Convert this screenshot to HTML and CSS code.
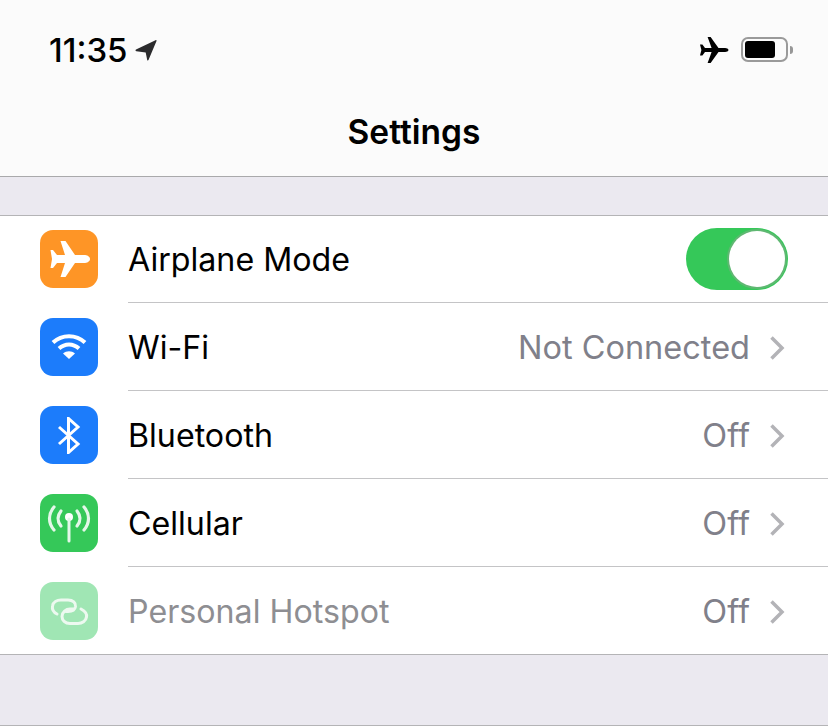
FILE: index.html
```html
<!DOCTYPE html>
<html>
<head>
  <meta charset="utf-8">
  <title>Settings</title>
  <link rel="stylesheet" href="styles.css">
</head>
<body>
  <header class="nav">
    <div class="status-bar">
      <div class="status-left">
        <span class="time">11:35</span>
        <svg class="location" width="24" height="24" viewBox="0 0 24 24"><path d="M2 11.500 21.500 2.200c.7-.3 1.200.2 1 .9L14.500 22c-.3.700-1.200.6-1.300-.1l-1.500-7.400-9.300-1.300c-1-.2-1.200-1.200-.4-1.700z" fill="#2b2b2d"/></svg>
      </div>
      <div class="status-right">
        <svg class="plane-small" width="30" height="28" viewBox="0 0 30 28"><path d="M29.500 14c0-1.300-1.800-2-3.400-2h-6.600L11.600 1h-3l4 11H6L3.400 8.500H1L2.400 14 1 19.500h2.400L6 16h6.600l-4 11h3l7.900-11h6.600c1.600 0 3.400-.7 3.400-2z" fill="#000"/></svg>
        <div class="battery">
          <div class="battery-level"></div>
        </div>
        <div class="battery-tip"></div>
      </div>
    </div>
    <h1 class="nav-title">Settings</h1>
  </header>

  <div class="gap-top"></div>

  <ul class="settings-list">
    <li class="row">
      <div class="icon icon-orange">
        <svg width="58" height="58" viewBox="0 0 58 58"><path d="M50 29c0-2.500-3-4-6-4h-9L25.500 11H20.500L25 25h-8l-4-5H10.500L12 29l-1.500 9H13l4-5h8l-4.500 14h5L35 33h9c3 0 6-1.500 6-4z" fill="#fff"/></svg>
      </div>
      <div class="row-body">
        <span class="row-label">Airplane Mode</span>
        <div class="toggle"><div class="knob"></div></div>
      </div>
    </li>
    <li class="row">
      <div class="icon icon-blue">
        <svg width="36" height="28" viewBox="0 0 36 28" fill="none" stroke="#fff" stroke-width="4"><path d="M2 9.500C11 1 25 1 34 9.500"/><path d="M8 15.500c6-5.500 14-5.500 20 0"/><path d="M18 26l-6-5.500c3.500-3 8.500-3 12 0z" fill="#fff" stroke="none"/></svg>
      </div>
      <div class="row-body">
        <span class="row-label">Wi-Fi</span>
        <span class="row-value">Not Connected</span>
        <svg class="chevron" width="16" height="26" viewBox="0 0 16 26"><path d="M2.500 2.500 13 13 2.500 23.500" fill="none" stroke="#b3b3b7" stroke-width="3.500"/></svg>
      </div>
    </li>
    <li class="row">
      <div class="icon icon-blue">
        <svg width="24" height="37" viewBox="0 0 24 37" fill="none" stroke="#fff" stroke-width="3"><path d="M2 10 21 27 11.500 35.500V1.500L21 10 2 27"/></svg>
      </div>
      <div class="row-body">
        <span class="row-label">Bluetooth</span>
        <span class="row-value">Off</span>
        <svg class="chevron" width="16" height="26" viewBox="0 0 16 26"><path d="M2.500 2.500 13 13 2.500 23.500" fill="none" stroke="#b3b3b7" stroke-width="3.500"/></svg>
      </div>
    </li>
    <li class="row">
      <div class="icon icon-green">
        <svg width="58" height="58" viewBox="0 0 58 58" fill="none" stroke="#e4f7e9" stroke-width="3.200" stroke-linecap="round"><path d="M14 13C8 20 8 29 14 36"/><path d="M21 17c-4 5-4 10 0 15"/><path d="M44 13c6 7 6 16 0 23"/><path d="M37 17c4 5 4 10 0 15"/><circle cx="29" cy="23" r="4" fill="#fff" stroke="none"/><path d="M29 25v22" stroke-width="3"/></svg>
      </div>
      <div class="row-body">
        <span class="row-label">Cellular</span>
        <span class="row-value">Off</span>
        <svg class="chevron" width="16" height="26" viewBox="0 0 16 26"><path d="M2.500 2.500 13 13 2.500 23.500" fill="none" stroke="#b3b3b7" stroke-width="3.500"/></svg>
      </div>
    </li>
    <li class="row row-disabled">
      <div class="icon icon-mint">
        <svg width="58" height="58" viewBox="0 0 58 58" fill="none" stroke="#edf9f0" stroke-width="3" stroke-linecap="round"><path d="M17 32c-4-2-5-5-4.500-8C13 20 17 18 21 18h7c5 0 8 3 7.500 6.500C35 27.500 32 29.500 28 29.500h-2"/><path d="M41 27c4 2 6 5 5.500 8C46 39 42 41.500 38 41.500h-8c-5 0-8-3.500-8-7C22 30 26 27 30 27h3"/></svg>
      </div>
      <div class="row-body">
        <span class="row-label">Personal Hotspot</span>
        <span class="row-value">Off</span>
        <svg class="chevron" width="16" height="26" viewBox="0 0 16 26"><path d="M2.500 2.500 13 13 2.500 23.500" fill="none" stroke="#b3b3b7" stroke-width="3.500"/></svg>
      </div>
    </li>
  </ul>

  <div class="gap-bottom"></div>
</body>
</html>
```

FILE: styles.css
```css
body {
  margin: 0;
  height: 727px;
  overflow: hidden;
  background-color: #fff;
  font-family: Inter, "Liberation Sans", sans-serif;
  color: #000;
}

.nav {
  height: 176px;
  background-color: #fbfbfb;
  border-bottom: 1px solid #a9a9ab;
}

.status-bar {
  height: 96px;
  box-sizing: border-box;
  padding: 3px 35px 0 49px;
  display: flex;
  justify-content: space-between;
  align-items: center;
}

.status-left {
  display: flex;
  align-items: center;
  gap: 6px;
}

.time {
  font-size: 33px;
  font-weight: 500;
}

.status-right {
  display: flex;
  align-items: center;
}

.plane-small {
  margin-right: 12px;
}

.battery {
  width: 47px;
  height: 25px;
  box-sizing: border-box;
  border: 2px solid #9a9a9a;
  border-radius: 7px;
  padding: 2px;
  display: flex;
}

.battery-level {
  width: 30px;
  background-color: #000;
  border-radius: 3px;
}

.battery-tip {
  width: 3px;
  height: 8px;
  margin-left: 2px;
  background-color: #979797;
  border-radius: 0 3px 3px 0;
}

.nav-title {
  margin: 0;
  text-align: center;
  font-size: 33.5px;
  font-weight: 600;
  line-height: 72px;
}

.gap-top {
  height: 38px;
  background-color: #ebe9f0;
  border-bottom: 1px solid #b4b4b6;
}

.settings-list {
  list-style: none;
  margin: 0;
  padding: 0;
  border-bottom: 1px solid #b4b4b6;
}

.row {
  height: 88px;
  padding-left: 40px;
  display: flex;
  align-items: center;
  gap: 30px;
}

/* first and last rows are a pixel shorter, the group lines take it */
.row:first-child,
.row:last-child {
  height: 87px;
}

.row:first-child .icon {
  margin-bottom: 1px;
}

.row:last-child .icon {
  margin-top: 1px;
}

.icon {
  width: 58px;
  height: 58px;
  flex-shrink: 0;
  border-radius: 13px;
  display: flex;
  align-items: center;
  justify-content: center;
}

.icon-orange { background-color: #fe9526; }
.icon-blue { background-color: #1c7cfb; }
.icon-green { background-color: #35c859; }
.icon-mint { background-color: #a0e6b4; }

.row-body {
  flex: 1;
  height: 100%;
  box-sizing: border-box;
  padding-right: 43px;
  display: flex;
  align-items: center;
  border-bottom: 1px solid #c4c4c6;
}

.row + .row .row-body {
  padding-top: 2px;
}

.row:last-child .row-body {
  border-bottom: none;
}

.row-label {
  flex: 1;
  font-size: 32.2px;
}

.row-value {
  font-size: 32.5px;
  color: #80808a;
  margin-right: 19px;
}

.row-disabled .row-label {
  color: #8e8e92;
}

.toggle {
  width: 102px;
  height: 62px;
  margin-right: -3px;
  box-sizing: border-box;
  padding: 3px 3px 3px 0;
  border-radius: 31px;
  background-color: #35c859;
  display: flex;
  justify-content: flex-end;
}

.knob {
  width: 56px;
  height: 56px;
  border-radius: 50%;
  background-color: #fff;
  box-shadow: 0 0 0 2px #5fb872;
}

.gap-bottom {
  height: 70px;
  background-color: #ebe9f0;
  border-bottom: 1px solid #b4b4b6;
}
```
